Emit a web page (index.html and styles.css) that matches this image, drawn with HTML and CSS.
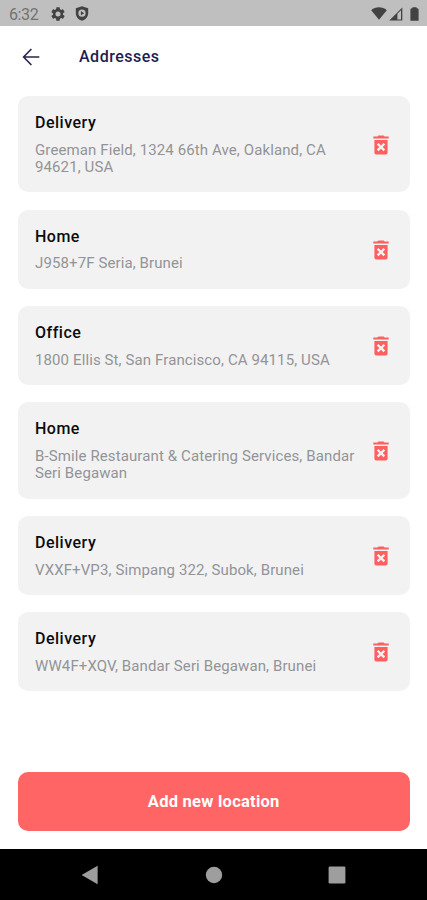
FILE: index.html
```html
<!DOCTYPE html>
<html lang="en">
<head>
    <meta charset="UTF-8">
    <meta name="viewport" content="width=device-width, initial-scale=1.0">
    <title>Addresses</title>
    <link rel="stylesheet" href="styles.css">
</head>
<body>
    <svg width="0" height="0" class="sprite">
        <symbol id="trash" viewBox="0 0 16 20">
            <path fill-rule="evenodd" d="M0.3 1.5H4.4L5.4 0.4H10.6L11.6 1.5H15.7V3.5H0.3ZM1.4 5H14.6V17.8Q14.6 19.6 12.8 19.6H3.2Q1.4 19.6 1.4 17.8ZM3.8 9.6L6.3 12.1L3.8 14.6L5.5 16.3L8 13.8L10.5 16.3L12.2 14.6L9.7 12.1L12.2 9.6L10.5 7.9L8 10.4L5.5 7.9Z"/>
        </symbol>
    </svg>
    <div class="screen">
        <div class="status-bar">
            <span class="time">6:32</span>
            <svg class="gear" viewBox="2 2 20 20" width="14" height="14"><path d="M19.14 12.94c.04-.3.06-.61.06-.94s-.02-.64-.07-.94l2.03-1.58a.49.49 0 0 0 .12-.61l-1.92-3.32a.49.49 0 0 0-.59-.22l-2.39.96a7 7 0 0 0-1.62-.94l-.36-2.54a.48.48 0 0 0-.48-.41h-3.84a.48.48 0 0 0-.47.41l-.36 2.54c-.59.24-1.13.57-1.62.94l-2.39-.96a.48.48 0 0 0-.59.22L2.74 8.87a.48.48 0 0 0 .12.61l2.03 1.58a6 6 0 0 0 0 1.88l-2.03 1.58a.49.49 0 0 0-.12.61l1.92 3.32c.12.22.37.29.59.22l2.39-.96c.5.38 1.03.7 1.62.94l.36 2.54c.05.24.24.41.48.41h3.84c.24 0 .44-.17.47-.41l.36-2.54a7 7 0 0 0 1.62-.94l2.39.96c.22.08.47 0 .59-.22l1.92-3.32a.48.48 0 0 0-.12-.61ZM12 15.6a3.6 3.6 0 1 1 0-7.2 3.6 3.6 0 0 1 0 7.2Z"/></svg>
            <svg class="shield" viewBox="0 0 14 15" width="14" height="15"><path fill-rule="evenodd" d="M7 0.3L13.2 2.3V7.3C13.2 11 10.4 13.8 7 14.8C3.6 13.8 0.8 11 0.8 7.3V2.3ZM7 3.6A3.6 3.6 0 1 0 7 10.8A3.6 3.6 0 1 0 7 3.6ZM5.9 5.1L9.2 7.2L5.9 9.3Z"/></svg>
            <span class="spacer"></span>
            <svg class="wifi" viewBox="0 0 16 13" width="16" height="13"><path d="M8 12.8L0.2 3.2C4.5-0.6 11.5-0.6 15.8 3.2Z"/></svg>
            <svg class="signal" viewBox="0 0 14 14" width="14" height="14"><path fill-rule="evenodd" d="M0.3 13.6L13.3 0.4V13.6ZM8.4 6.8V12.4H12V3.2Z"/></svg>
            <svg class="battery" viewBox="0 0 9 14" width="9" height="14"><path d="M2.4 0.3H6.6V1.3H7.4Q8.6 1.5 8.6 2.8V13.7H0.4V2.8Q0.4 1.5 1.6 1.3H2.4Z"/></svg>
        </div>

        <div class="header">
            <svg class="back" viewBox="0 0 18 18" width="18" height="18"><path d="M17.3 9H1.8M9.4 1L1.6 9L9.4 17"/></svg>
            <h1>Addresses</h1>
        </div>

        <div class="address-list">
            <div class="card">
                <div class="info">
                    <h2>Delivery</h2>
                    <p>Greeman Field, 1324 66th Ave, Oakland, CA<br>94621, USA</p>
                </div>
                <svg class="trash"><use href="#trash"/></svg>
            </div>
            <div class="card">
                <div class="info">
                    <h2>Home</h2>
                    <p>J958+7F Seria, Brunei</p>
                </div>
                <svg class="trash"><use href="#trash"/></svg>
            </div>
            <div class="card">
                <div class="info">
                    <h2>Office</h2>
                    <p>1800 Ellis St, San Francisco, CA 94115, USA</p>
                </div>
                <svg class="trash"><use href="#trash"/></svg>
            </div>
            <div class="card">
                <div class="info">
                    <h2>Home</h2>
                    <p>B-Smile Restaurant &amp; Catering Services, Bandar<br>Seri Begawan</p>
                </div>
                <svg class="trash"><use href="#trash"/></svg>
            </div>
            <div class="card">
                <div class="info">
                    <h2>Delivery</h2>
                    <p>VXXF+VP3, Simpang 322, Subok, Brunei</p>
                </div>
                <svg class="trash"><use href="#trash"/></svg>
            </div>
            <div class="card">
                <div class="info">
                    <h2>Delivery</h2>
                    <p>WW4F+XQV, Bandar Seri Begawan, Brunei</p>
                </div>
                <svg class="trash"><use href="#trash"/></svg>
            </div>
        </div>

        <button class="add-btn">Add new location</button>

        <div class="nav-bar">
            <svg viewBox="0 0 18 20" width="18" height="20"><path d="M0.6 10L16.6 0.8V19.2Z"/></svg>
            <svg viewBox="0 0 18 18" width="18" height="18"><circle cx="9" cy="9" r="8.2"/></svg>
            <svg viewBox="0 0 18 18" width="18" height="18"><rect x="0.6" y="0.6" width="16.8" height="16.8" rx="1.2"/></svg>
        </div>
    </div>
</body>
</html>
```
FILE: styles.css
```css
* {
    box-sizing: border-box;
}

body {
    margin: 0;
    background-color: #ffffff;
    font-family: Roboto, "Liberation Sans", sans-serif;
}

.sprite {
    display: block;
}

.screen {
    display: flex;
    flex-direction: column;
    width: 427px;
    height: 900px;
    overflow: hidden;
}

.status-bar {
    display: flex;
    align-items: center;
    height: 26px;
    padding: 1px 8px 0 9px;
    background-color: #bfbfbf;
    fill: #424242;
}

.time {
    width: 42px;
    padding-top: 1px;
    font-size: 16px;
    letter-spacing: -0.4px;
    color: #727272;
}

.shield {
    margin-left: 10px;
}

.spacer {
    flex: 1;
}

.signal {
    margin-left: 2px;
}

.battery {
    margin-left: 7px;
}

.header {
    display: flex;
    align-items: center;
    height: 61px;
    padding-left: 22px;
}

.back {
    fill: none;
    stroke: #28244f;
    stroke-width: 1.6;
}

h1 {
    margin: 0 0 0 39px;
    font-size: 16px;
    font-weight: 500;
    letter-spacing: 0.5px;
    color: #211d4c;
}

.address-list {
    display: flex;
    flex-direction: column;
    gap: 17.5px;
    flex: 1;
    padding: 9px 17px 0 17.5px;
}

.card {
    display: flex;
    justify-content: space-between;
    align-items: center;
    padding: 17px 21.5px 15.8px 17.5px;
    border-radius: 10px;
    background-color: #f2f2f2;
}

h2 {
    margin: 0 0 9.5px;
    font-size: 16px;
    font-weight: 500;
    line-height: 19px;
    letter-spacing: 0.5px;
    color: #0c0c0c;
}

.info p {
    margin: 0;
    font-size: 15px;
    line-height: 17.5px;
    letter-spacing: 0.11px;
    color: #929497;
    white-space: nowrap;
}

.trash {
    flex: none;
    width: 16px;
    height: 20px;
    fill: #ff5f5f;
}

.add-btn {
    height: 59px;
    margin: 0 17px 18px 17.5px;
    padding: 0;
    border: none;
    border-radius: 10px;
    background-color: #ff6565;
    color: #ffffff;
    font-family: inherit;
    font-size: 16.5px;
    font-weight: 700;
    letter-spacing: 0.25px;
}

.nav-bar {
    display: flex;
    justify-content: space-between;
    align-items: center;
    height: 51px;
    padding: 0 81px;
    background-color: #000000;
    fill: #9e9e9e;
}
```
